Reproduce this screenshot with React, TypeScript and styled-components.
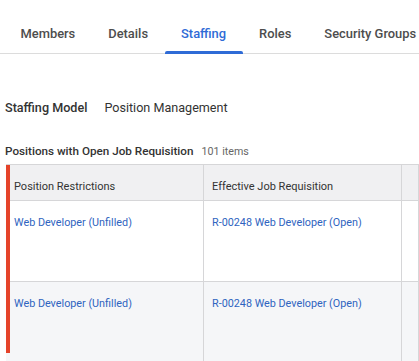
import { Fragment } from 'react';
import styled, { createGlobalStyle } from 'styled-components';

const GlobalStyle = createGlobalStyle`
  html, body {
    margin: 0;
    padding: 0;
    background: #ffffff;
    font-family: Roboto, "Liberation Sans", Arial, sans-serif;
    overflow: hidden;
  }
`;

const StyledPage = styled.div`
  width: 419px;
  height: 361px;
  overflow: hidden;
`;

const StyledTabBar = styled.nav`
  border-bottom: 1px solid #dcdcdc;
  display: flex;
  height: 53px;
  padding-left: 4px;
  white-space: nowrap;
`;

const StyledTab = styled.button<{ isActive?: boolean }>`
  background: none;
  border: none;
  color: ${({ isActive }) => (isActive ? '#2f6bd6' : '#4d4d4d')};
  cursor: pointer;
  flex-shrink: 0;
  font-family: inherit;
  font-size: 12.9px;
  font-weight: 500;
  height: 53px;
  padding: 13px 16.5px 0;
  position: relative;
  &:after {
    background-color: #2f6bd6;
    border-radius: 2px 2px 0 0;
    bottom: -1px;
    content: '';
    display: ${({ isActive }) => (isActive ? 'block' : 'none')};
    height: 3px;
    left: 0;
    position: absolute;
    right: 0;
  }
`;

const StyledField = styled.div`
  align-items: center;
  display: flex;
  gap: 17px;
  font-size: 12.6px;
  margin-top: 46px;
  padding-left: 5px;
`;

const StyledFieldLabel = styled.span`
  color: #333333;
  font-weight: 500;
`;

const StyledFieldValue = styled.span`
  color: #333333;
`;

const StyledGridTitle = styled.h3`
  align-items: baseline;
  display: flex;
  gap: 8px;
  font-size: 11.7px;
  font-weight: 500;
  color: #333333;
  margin: 29px 0 0;
  padding-left: 5px;
`;

const StyledCount = styled.span`
  color: #666666;
  font-size: 10.7px;
  font-weight: 400;
`;

const StyledTable = styled.div`
  border-top: 1px solid #d6d6d8;
  display: grid;
  grid-template-columns: 198px 198px 1fr;
  margin: 6px 0 0 6px;
  position: relative;
`;

const StyledCell = styled.div<{ isHeader?: boolean; isShaded?: boolean }>`
  background-color: ${({ isHeader, isShaded }) =>
    isHeader ? '#f0f0f2' : isShaded ? '#f5f6f8' : '#ffffff'};
  border-bottom: 1px solid #d6d6d8;
  border-right: 1px solid #d6d6d8;
  box-sizing: border-box;
  color: ${({ isHeader }) => (isHeader ? '#333333' : '#2f64c0')};
  font-size: ${({ isHeader }) => (isHeader ? '11px' : '10.8px')};
  height: ${({ isHeader }) => (isHeader ? '36px' : '81px')};
  padding: 15px 8px 0;
  white-space: nowrap;
`;

const StyledSelectionBar = styled.div`
  background-color: #e5432a;
  height: 188px;
  left: 0;
  position: absolute;
  top: 0;
  width: 4px;
`;

const rows = [
  { position: 'Web Developer (Unfilled)', requisition: 'R-00248 Web Developer (Open)' },
  { position: 'Web Developer (Unfilled)', requisition: 'R-00248 Web Developer (Open)' },
];

const tabs = ['Members', 'Details', 'Staffing', 'Roles', 'Security Groups'];

const App: React.FC = () => (
  <StyledPage>
    <GlobalStyle />
    <StyledTabBar>
      {tabs.map((tab) => (
        <StyledTab key={tab} isActive={tab === 'Staffing'}>
          {tab}
        </StyledTab>
      ))}
    </StyledTabBar>
    <StyledField>
      <StyledFieldLabel>Staffing Model</StyledFieldLabel>
      <StyledFieldValue>Position Management</StyledFieldValue>
    </StyledField>
    <StyledGridTitle>
      Positions with Open Job Requisition
      <StyledCount>101 items</StyledCount>
    </StyledGridTitle>
    <StyledTable>
      <StyledCell isHeader>Position Restrictions</StyledCell>
      <StyledCell isHeader>Effective Job Requisition</StyledCell>
      <StyledCell isHeader />
      {rows.map((row, i) => (
        <Fragment key={i}>
          <StyledCell isShaded={i % 2 === 1}>{row.position}</StyledCell>
          <StyledCell isShaded={i % 2 === 1}>{row.requisition}</StyledCell>
          <StyledCell isShaded={i % 2 === 1} />
        </Fragment>
      ))}
      <StyledSelectionBar />
    </StyledTable>
  </StyledPage>
);

export default App;
